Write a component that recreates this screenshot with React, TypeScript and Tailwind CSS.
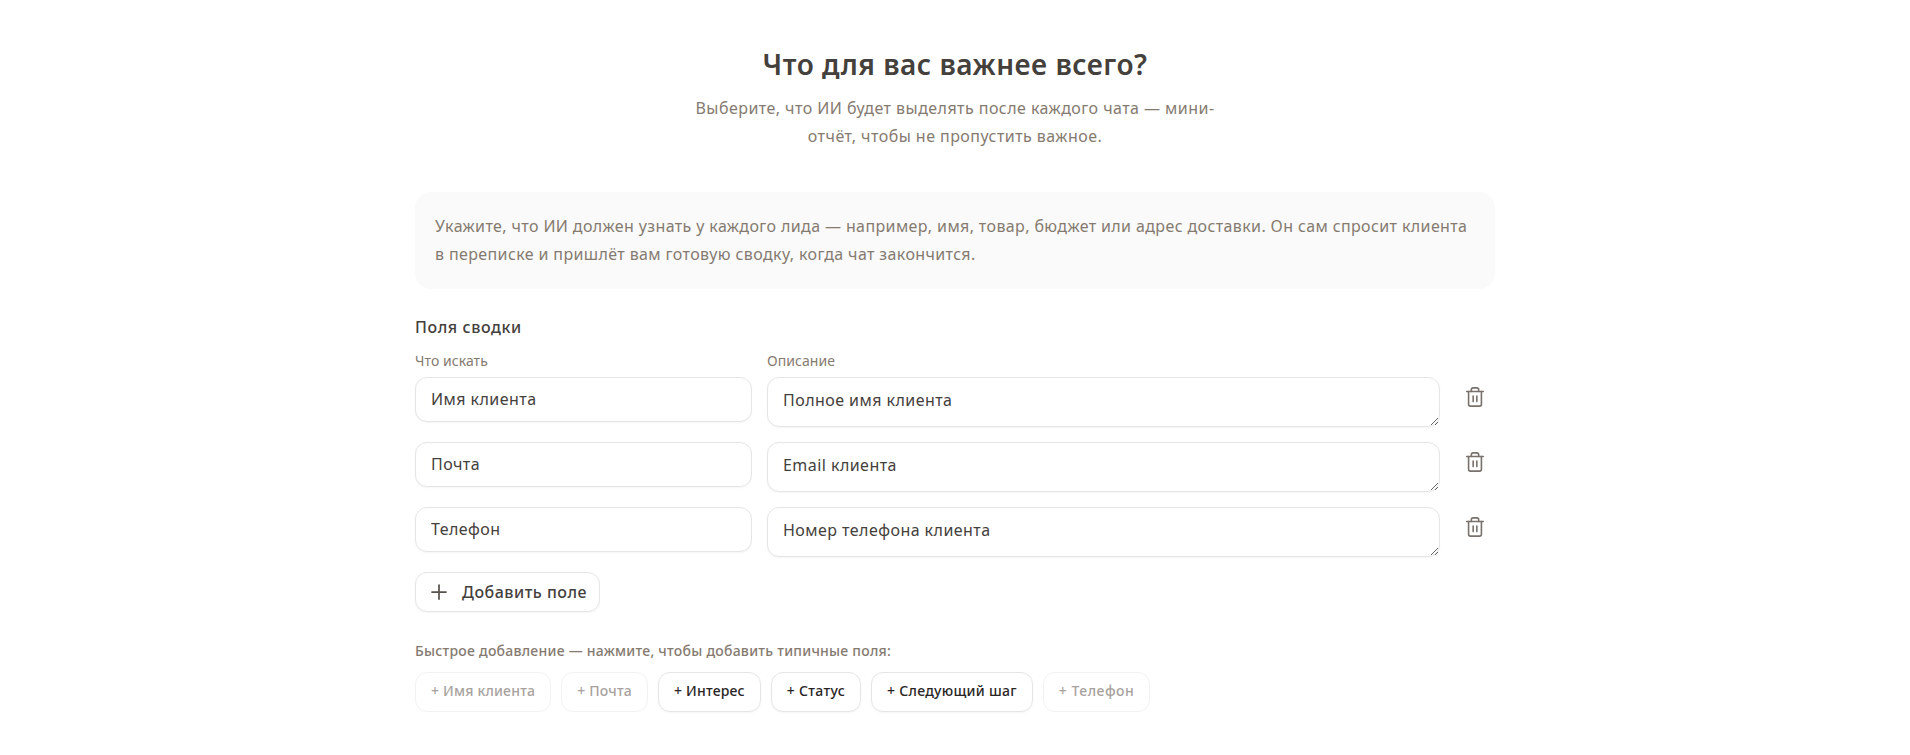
import { Plus, Trash2 } from "lucide-react";

const rows = [
  ["Имя клиента", "Полное имя клиента"],
  ["Почта", "Email клиента"],
  ["Телефон", "Номер телефона клиента"],
];
const chips: [string, string][] = [
  ["+ Имя клиента", "tracking-[0.2px] border-[#f3f2f1] text-[#a8a29e]"],
  ["+ Почта", "tracking-[0.2px] border-[#f3f2f1] text-[#a8a29e]"],
  ["+ Интерес", "tracking-[0.2px] border-[#e7e5e4] text-[#292524] shadow-[0_1px_2px_rgba(0,0,0,0.04)]"],
  ["+ Статус", "tracking-[0.3px] border-[#e7e5e4] text-[#292524] shadow-[0_1px_2px_rgba(0,0,0,0.04)]"],
  ["+ Следующий шаг", "tracking-[0.3px] border-[#e7e5e4] text-[#292524] shadow-[0_1px_2px_rgba(0,0,0,0.04)]"],
  ["+ Телефон", "tracking-[0.5px] border-[#f3f2f1] text-[#a8a29e]"],
];

export default function App() {
  return (
    <div className="min-h-[755px] bg-white font-['Noto_Sans',sans-serif] text-[#44403c]">
      <div className="mx-auto flex w-[1080px] flex-col pt-[45px]">
        <h1 className="text-center text-[28px] leading-[38px] font-semibold tracking-[0.5px] text-[#44403c]">Что для вас важнее всего?</h1>
        <p className="mx-auto mt-[11px] w-[520px] text-center text-base leading-7 tracking-[0.45px] text-[#857a70]">
          Выберите, что ИИ будет выделять после каждого чата — мини-отчёт, чтобы не пропустить важное.
        </p>
        <div className="mt-[42px] rounded-2xl bg-[#fafafa] px-5 pt-5 pb-[21px] text-base leading-7 tracking-[0.38px] text-[#857a70]">
          Укажите, что ИИ должен узнать у каждого лида — например, имя, товар, бюджет или адрес доставки. Он сам спросит клиента в переписке и пришлёт вам готовую сводку, когда чат закончится.
        </div>
        <h2 className="mt-[26px] text-base leading-6 font-medium tracking-[0.6px] text-[#44403c]">Поля сводки</h2>
        <div className="mt-[12px] flex gap-[15px] text-sm leading-5 tracking-[0.06px] text-[#857a70]">
          <span className="w-[337px]">Что искать</span>
          <span>Описание</span>
        </div>
        <div className="mt-[6px] flex flex-col gap-[15px]">
          {rows.map(([a, b]) => (
            <div key={a} className="flex items-start">
              <input
                readOnly
                value={a}
                className="h-[45px] w-[337px] rounded-xl border border-[#e7e5e4] bg-white px-[15px] pb-[2px] text-base tracking-[0.45px] text-[#44403c] shadow-[0_1px_2px_rgba(0,0,0,0.04)] outline-none font-['Noto_Sans',sans-serif]"
              />
              <textarea
                readOnly
                value={b}
                rows={1}
                className="ml-[15px] h-[50px] w-[673px] resize-y rounded-xl border border-[#e7e5e4] bg-white px-[15px] pt-[10px] pb-[10px] text-base leading-6 tracking-[0.45px] text-[#44403c] shadow-[0_1px_2px_rgba(0,0,0,0.04)] outline-none font-['Noto_Sans',sans-serif]"
              />
              <button className="ml-[24px] mt-[9px] text-[#78716c]">
                <Trash2 size={22} strokeWidth={1.75} />
              </button>
            </div>
          ))}
        </div>
        <button className="mt-[15px] flex h-10 w-[185px] items-center rounded-xl border border-[#e7e5e4] bg-white pl-[11px] text-base font-medium tracking-[0.5px] text-[#44403c] shadow-[0_1px_2px_rgba(0,0,0,0.04)]">
          <Plus size={24} strokeWidth={1.75} className="text-[#57534e]" />
          <span className="ml-[11px]">Добавить поле</span>
        </button>
        <p className="mt-[29px] text-sm leading-5 font-medium tracking-[0.25px] text-[#857a70]">Быстрое добавление — нажмите, чтобы добавить типичные поля:</p>
        <div className="mt-[11px] flex gap-[10px]">
          {chips.map(([t, c]) => (
            <button key={t} className={"h-10 rounded-xl border bg-white px-[15px] pb-[2px] text-sm font-medium " + c}>
              {t}
            </button>
          ))}
        </div>
      </div>
    </div>
  );
}
